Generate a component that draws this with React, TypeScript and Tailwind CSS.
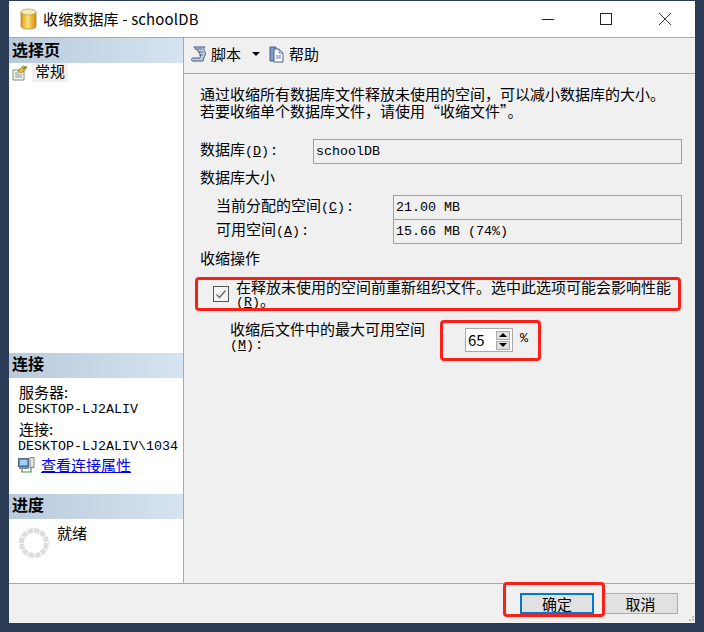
import React from 'react';

const cjk = "font-['Noto_Sans_CJK_SC',sans-serif]";
const mono = "font-['Liberation_Mono',monospace] text-[13.33px]";

const SectionHeader = ({ label, pb }: { label: string; pb: string }) => (
  <div className={`h-[25px] pl-[3px] flex items-center bg-gradient-to-r from-[#b9cadb] to-[#d6e4f1] font-bold text-[16px] text-black ${pb}`}>
    {label}
  </div>
);

const Key = ({ k }: { k: string }) => (
  <span className={mono}>
    (<span className="underline">{k}</span>)
  </span>
);

const ValueBox = ({ value, className }: { value: string; className: string }) => (
  <div className={`h-[25px] border border-[#a0a0a0] pl-[2px] flex items-center ${mono} ${className}`}>{value}</div>
);

const DbIcon = () => (
  <svg width="17" height="22" viewBox="0 0 17 22">
    <defs>
      <linearGradient id="db" x1="0" x2="1" y1="0" y2="0">
        <stop offset="0" stopColor="#d79a10" />
        <stop offset="0.45" stopColor="#ffe27a" />
        <stop offset="1" stopColor="#d08c08" />
      </linearGradient>
    </defs>
    <path d="M1 4v14c0 2 3 3 7.500 3s7.500-1 7.500-3V4z" fill="url(#db)" stroke="#a87a20" strokeWidth="0.7" />
    <ellipse cx="8.500" cy="4" rx="7.500" ry="3" fill="#f6e9b0" stroke="#a89a60" strokeWidth="0.7" />
  </svg>
);

const ScriptIcon = () => (
  <svg width="16" height="17" viewBox="0 0 16 17">
    <path d="M3 1h11c-2 1-1 3 0 5s0 4-1 5l-1 4H2c-2 0-2-3 0-3h7c1-2 0-4-1-6S3 3 3 1z" fill="#c3cfe0" stroke="#44597c" strokeWidth="1" />
    <path d="M5 3h6M7 6h5M8 9h4" stroke="#44597c" strokeWidth="0.8" />
  </svg>
);

const HelpIcon = () => (
  <svg width="16" height="17" viewBox="0 0 16 17">
    <path d="M1 1h6v14H1z" fill="#7f9bc8" stroke="#46608e" />
    <path d="M5 3h5l4 4v9H5z" fill="#fff" stroke="#46608e" />
    <path d="M10 3v4h4z" fill="#d9e2f0" stroke="#46608e" strokeWidth="0.7" />
    <path d="M7 10h5M7 12h5" stroke="#46608e" strokeWidth="0.8" />
  </svg>
);

const GeneralIcon = () => (
  <svg width="16" height="16" viewBox="0 0 16 16">
    <path d="M1 5h11v10H1z" fill="#f6f3e8" stroke="#8a8a80" />
    <path d="M3 8h4M3 10h7M3 12h7" stroke="#8b98a8" />
    <path d="M6 6l5-5 4 1-3 4-3 2z" fill="#e9bd35" stroke="#8c7020" strokeWidth="0.7" />
    <path d="M11 4l3-2" stroke="#3f8f3a" strokeWidth="1.500" />
  </svg>
);

const ConnectionIcon = () => (
  <svg width="17" height="16" viewBox="0 0 17 16">
    <rect x="0.500" y="1.500" width="10" height="8" fill="#4f8fe0" stroke="#5a6f90" />
    <rect x="2" y="3" width="7" height="5" fill="#9fd0f8" />
    <path d="M1 11h10" stroke="#8090a8" strokeWidth="2" />
    <rect x="12" y="0.500" width="4" height="10" fill="#e4e4e4" stroke="#808890" />
    <path d="M4 12v3h9v-4" fill="none" stroke="#3e9a2e" strokeWidth="1.200" />
  </svg>
);

const ProgressRing = () => (
  <svg width="30" height="30" viewBox="0 0 30 30">
    <circle cx="15" cy="15" r="12.500" fill="none" stroke="#dedede" strokeWidth="5" strokeDasharray="5.500 1" />
  </svg>
);

const RedBox = ({ className }: { className: string }) => (
  <div className={`absolute border-[3px] border-[#fb2016] rounded-[4px] ${className}`} />
);

export default function App() {
  return (
    <div className={`relative w-[704px] h-[632px] overflow-hidden bg-[#2a3b55] pt-px pl-[9px] text-[15px] leading-[16px] text-black ${cjk}`}>
      <div className="w-[686px] h-[622px] flex flex-col bg-[#f0f0f0]">
        {/* title bar */}
        <div className="h-[37px] bg-white flex items-center border-b border-[#a9a9a9] shrink-0">
          <div className="ml-[11px] mr-[6px] flex"><DbIcon /></div>
          <span className="text-[15px] tracking-[0.15px] pb-[1px]">收缩数据库 - schoolDB</span>
          <div className="ml-auto flex items-center">
            <svg width="14" height="14" viewBox="0 0 14 14" className="mr-[44px]"><path d="M1 7.500h12" stroke="#222" /></svg>
            <svg width="14" height="14" viewBox="0 0 14 14" className="mr-[45px]"><rect x="1.500" y="1.500" width="11" height="11" fill="none" stroke="#222" /></svg>
            <svg width="14" height="14" viewBox="0 0 14 14" className="mr-[23px]"><path d="M1 1l12 12M13 1L1 13" stroke="#333" /></svg>
          </div>
        </div>

        <div className="flex flex-1 min-h-0">
          {/* sidebar */}
          <div className="w-[175px] bg-white border-r border-[#a9a9a9] flex flex-col shrink-0">
            <SectionHeader label="选择页" pb="pb-[3px]" />
            <div className="h-[290px] pl-[3px]">
              <div className="flex items-center h-[19px]">
                <GeneralIcon />
                <span className="ml-[4px] px-[3px] h-[19px] bg-[#f0f0f0]">常规</span>
              </div>
            </div>
            <SectionHeader label="连接" pb="pb-[6px]" />
            <div className="h-[116px] pl-[9px] pt-[6px]">
              <div className="pl-px">服务器:</div>
              <div className={`mt-[2px] ${mono}`}>DESKTOP-LJ2ALIV</div>
              <div className="mt-[3px] pl-px">连接:</div>
              <div className={`mt-[2px] ${mono}`}>DESKTOP-LJ2ALIV\1034</div>
              <div className="flex items-center mt-[2px]">
                <ConnectionIcon />
                <span className="ml-[6px] text-[#0000ee] underline">查看连接属性</span>
              </div>
            </div>
            <SectionHeader label="进度" pb="pb-[6px]" />
            <div className="flex pl-[10px] pt-[9px]">
              <ProgressRing />
              <span className="ml-[8px] -mt-[3px]">就绪</span>
            </div>
          </div>

          {/* main panel */}
          <div className="flex-1 flex flex-col min-w-0">
            <div className="h-[36px] border-b border-[#a9a9a9] flex items-center pl-[7px] pb-[3px] shrink-0">
              <ScriptIcon />
              <span className="ml-[4px]">脚本</span>
              <span className="ml-[11px] w-0 h-0 border-x-[4px] border-x-transparent border-t-[4px] border-t-black" />
              <span className="ml-[9px] flex"><HelpIcon /></span>
              <span className="ml-[4px]">帮助</span>
            </div>
            <div className="pl-[16px] pr-[12px] pt-[11px] flex flex-col">
              <p className="leading-[17px]">通过收缩所有数据库文件释放未使用的空间{'\uFF0C'}可以减小数据库的大小。</p>
              <p className="leading-[17px]">若要收缩单个数据库文件{'\uFF0C'}请使用“收缩文件”。</p>
              <div className="flex items-center mt-[20px]">
                <span className="w-[113px] pb-[2px]">数据库<Key k="D" /><span className="ml-[3px]">:</span></span>
                <ValueBox value="schoolDB" className="w-[369px]" />
              </div>
              <div className="mt-[5px] h-[16px]">数据库大小</div>
              <div className="flex items-center mt-[10px] pl-[16px]">
                <span className="w-[177px] pb-[3px]">当前分配的空间<Key k="C" /><span className="ml-[3px]">:</span></span>
                <ValueBox value="21.00 MB" className="w-[289px]" />
              </div>
              <div className="flex items-center -mt-px pl-[16px]">
                <span className="w-[177px] pb-[3px]">可用空间<Key k="A" /><span className="ml-[3px]">:</span></span>
                <ValueBox value="15.66 MB (74%)" className="w-[289px]" />
              </div>
              <div className="mt-[6px] h-[16px]">收缩操作</div>
              <div className="flex mt-[13px] pl-[13px] h-[32px]">
                <div className="w-[16px] h-[16px] mt-[7px] shrink-0 border border-[#555] bg-[#f4f4f4] flex items-center justify-center">
                  <svg width="12" height="12" viewBox="0 0 12 12"><path d="M1.500 6.500l3 3 6-7" fill="none" stroke="#666" strokeWidth="1.300" /></svg>
                </div>
                <div className="ml-[7px] w-[450px]">
                  <div className="h-[15px] leading-[15px]">在释放未使用的空间前重新组织文件。选中此选项可能会影响性能</div>
                  <div className="h-[11px] leading-[11px]"><Key k="R" />。</div>
                </div>
              </div>
              <div className="flex mt-[10px] pl-[30px]">
                <div className="w-[235px] leading-[16px]">
                  <div>收缩后文件中的最大可用空间</div>
                  <div className="leading-[12px]"><Key k="M" /><span className="ml-[3px]">:</span></div>
                </div>
                <div className="w-[48px] h-[24px] mt-[7px] border border-[#a9a9a9] bg-white flex items-center justify-between pl-[2px] pr-[2px] text-[15px]">
                  65
                  <div className="flex flex-col gap-px">
                    <span className="w-[14px] h-[9px] bg-[#e1e1e1] border border-[#a9a9a9] flex items-center justify-center"><span className="w-0 h-0 border-x-[4px] border-x-transparent border-b-[4px] border-b-black" /></span>
                    <span className="w-[14px] h-[9px] bg-[#e1e1e1] border border-[#a9a9a9] flex items-center justify-center"><span className="w-0 h-0 border-x-[4px] border-x-transparent border-t-[4px] border-t-black" /></span>
                  </div>
                </div>
                <span className={`ml-[7px] mt-[10px] ${mono}`}>%</span>
              </div>
            </div>
          </div>
        </div>

        {/* footer */}
        <div className="h-[40px] border-t border-[#a9a9a9] flex items-start justify-end pr-[17px] pt-[9px] gap-[9px] shrink-0">
          <button className="w-[74px] h-[21px] bg-[#e1e1e1] border-2 border-[#0078d7] flex items-center justify-center">确定</button>
          <button className="w-[75px] h-[21px] bg-[#e1e1e1] border border-[#adadad] flex items-center justify-center">取消</button>
        </div>
      </div>

      <RedBox className="left-[195px] top-[277px] w-[486px] h-[34px]" />
      <RedBox className="left-[440px] top-[320px] w-[101px] h-[41px]" />
      <RedBox className="left-[503px] top-[582px] w-[102px] h-[35px]" />

      {/* resize grip */}
      <div className="absolute left-[689px] top-[616px] grid grid-cols-2 gap-px">
        <span />
        <span className="w-[2px] h-[2px] bg-[#c4c4c4]" />
        <span className="w-[2px] h-[2px] bg-[#c4c4c4]" />
        <span className="w-[2px] h-[2px] bg-[#c4c4c4]" />
      </div>
    </div>
  );
}
